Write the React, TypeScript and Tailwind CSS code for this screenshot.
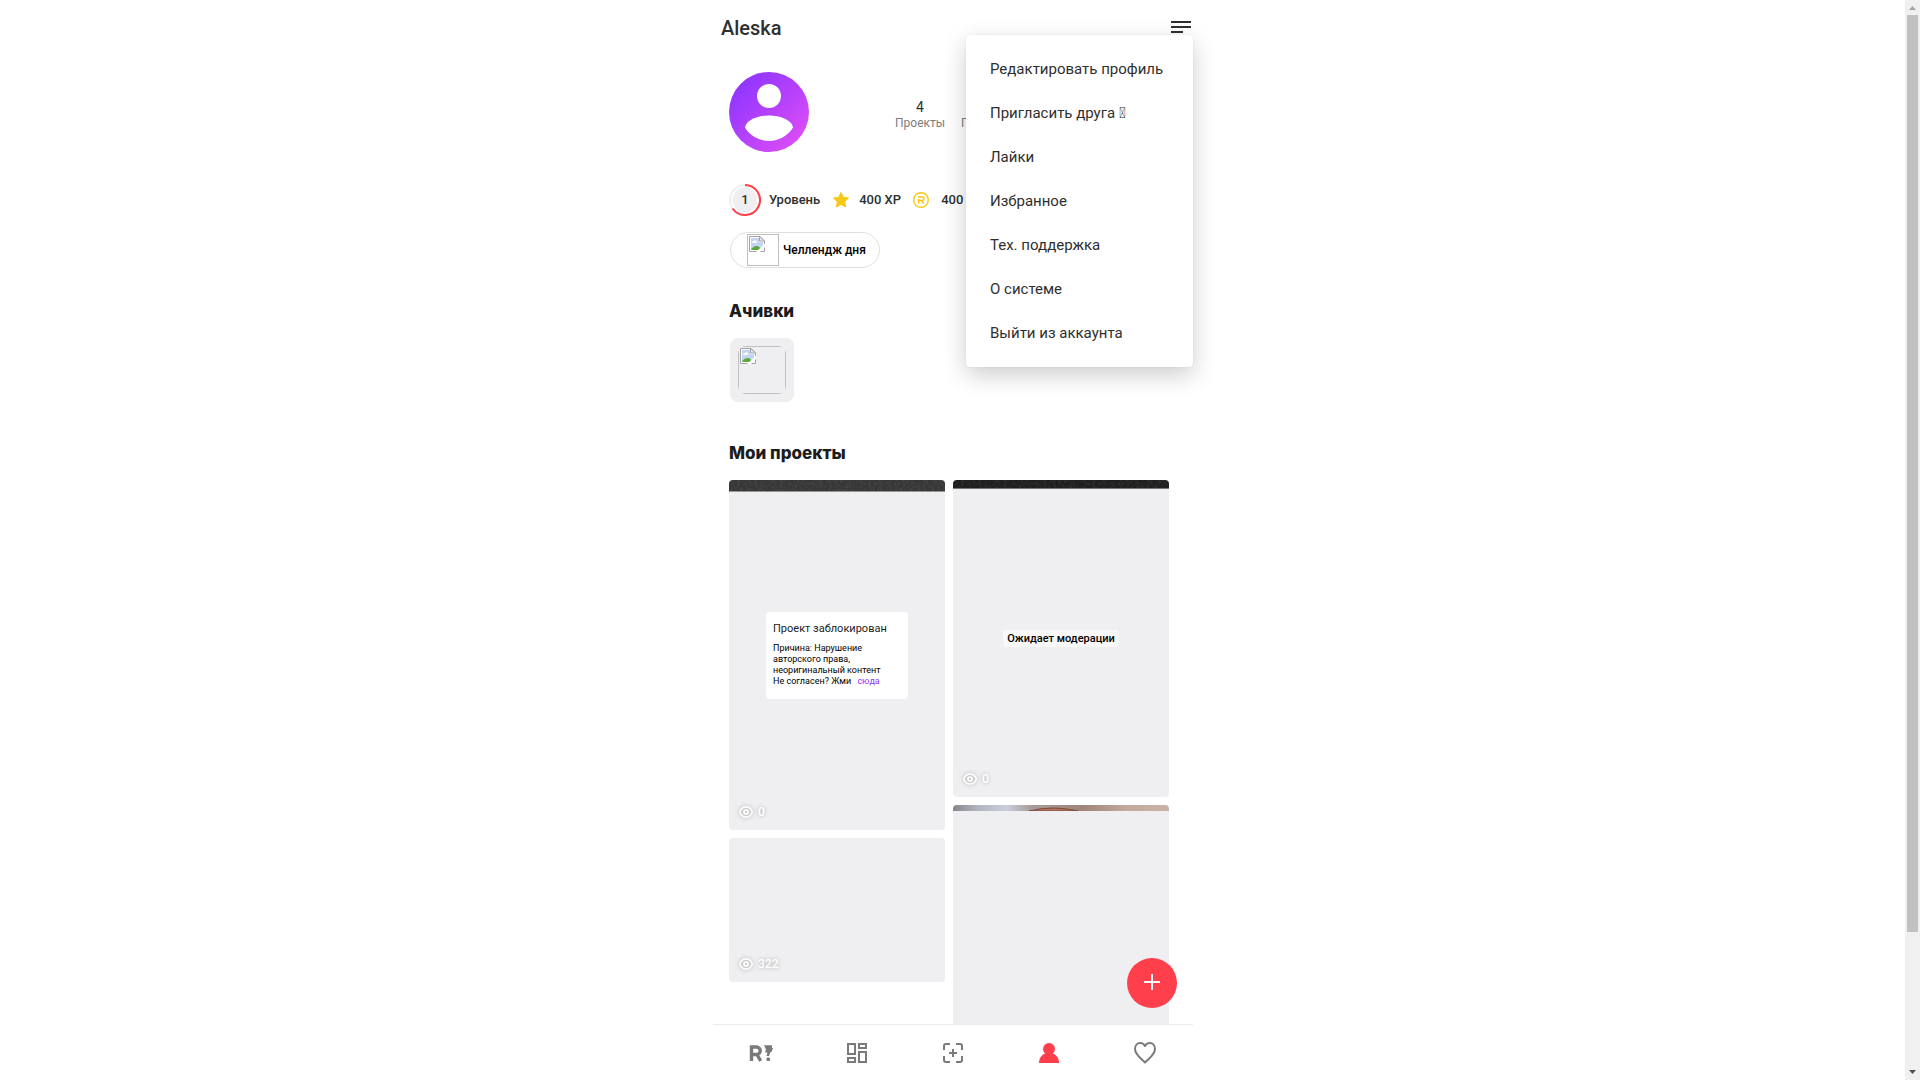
import React from 'react';

const menuItems = [
  'Редактировать профиль',
  'Пригласить друга \uE000',
  'Лайки',
  'Избранное',
  'Тех. поддержка',
  'О системе',
  'Выйти из аккаунта',
];

function BrokenImageIcon() {
  return (
    <svg width="16" height="16" viewBox="0 0 16 16" aria-hidden="true">
      <path d="M0.5 0.5H11L15.5 5V15.5H0.5Z" fill="#fff" stroke="#a3a3a3" />
      <path d="M2 2H10V6H14V14H2Z" fill="#c3d4f7" />
      <path d="M3 6.5a1.5 1.5 0 0 1 1.5-1.5 2 2 0 0 1 3.5 0.5 1 1 0 0 1 0 1.5H3.5Z" fill="#fff" />
      <path d="M2 14C3 11.500 5.500 10 8 10c1.500 0 2.500 1 3 2v2Z" fill="#55ab35" />
      <path d="M7 16L16 7.500V11L11 16Z" fill="#fff" />
      <path d="M10.500 0.500V5H15.500Z" fill="#eee" stroke="#a3a3a3" />
    </svg>
  );
}

function Eye() {
  return (
    <svg width="16" height="16" viewBox="0 0 16 16" fill="none" stroke="#fff" className="drop-shadow-[0_0_2px_rgba(0,0,0,0.3)]" aria-hidden="true">
      <path d="M1.700 8C4 1.300 12 1.300 14.300 8C12 14.700 4 14.700 1.700 8Z" strokeWidth="1.400" />
      <circle cx="8" cy="8" r="2" strokeWidth="1.700" />
    </svg>
  );
}

function Views({ count }: { count: number }) {
  return (
    <div className="absolute bottom-2.5 left-[9px] flex items-center gap-1 text-xs leading-4 font-medium text-white [text-shadow:0_0_4px_rgba(0,0,0,0.3)]">
      <Eye />
      <span>{count}</span>
    </div>
  );
}

function GrainStrip({ id, base, className }: { id: string; base: string; className: string }) {
  return (
    <svg className={className} aria-hidden="true">
      <filter id={id} x="0" y="0" width="100%" height="100%">
        <feTurbulence type="fractalNoise" baseFrequency="0.35" numOctaves="3" seed="4" />
        <feColorMatrix values="0 0 0 0 1  0 0 0 0 1  0 0 0 0 1  0.5 0 0 0 -0.18" />
      </filter>
      <rect width="100%" height="100%" fill={base} />
      <rect width="100%" height="100%" filter={`url(#${id})`} opacity="0.35" />
    </svg>
  );
}

function Stat({ value, label }: { value: string; label: string }) {
  return (
    <div className="flex flex-col items-center">
      <span className="text-sm leading-4 text-[#2f2f2f]">{value}</span>
      <span className="text-xs leading-4 text-[#7d7d7d]">{label}</span>
    </div>
  );
}

function NavLink({ label, children }: { label: string; children: React.ReactNode }) {
  return (
    <a href="#" aria-label={label} className="flex flex-1 items-center justify-center">
      {children}
    </a>
  );
}

export default function App() {
  return (
    <div className="flex h-screen overflow-hidden bg-white font-['Roboto','Noto_Sans',sans-serif] text-[#2f2f2f]">
      <div className="min-w-0 flex-1 pl-px">
        <div className="relative mx-auto flex h-full max-w-[480px] flex-col">
          <header className="flex h-14 shrink-0 items-center justify-between pr-0.5 pl-2">
            <h1 className="text-xl leading-6 font-medium">Aleska</h1>
            <button aria-label="Меню">
              <svg width="20" height="14" viewBox="0 0 20 14" fill="#2f2f33" aria-hidden="true">
                <rect y="0" width="20" height="2" />
                <rect y="5" width="20" height="2" />
                <rect y="10" width="12" height="2" />
              </svg>
            </button>
          </header>

          <main className="min-h-0 flex-1 overflow-hidden px-4">
            <section className="flex items-center pt-4">
              <svg width="80" height="80" viewBox="0 0 80 80" className="shrink-0" aria-label="Аватар">
                <defs>
                  <linearGradient id="avatar" x1="0.1" y1="0.1" x2="0.9" y2="0.9">
                    <stop stopColor="#8c35ff" />
                    <stop offset="1" stopColor="#dd4df8" />
                  </linearGradient>
                </defs>
                <circle cx="40" cy="40" r="40" fill="url(#avatar)" />
                <circle cx="40" cy="24" r="12" fill="#fff" />
                <path d="M16 55.500C17 48 29 43.500 40 43.500S63 48 64 55.500C59 63.500 50 69 40 69S21 63.500 16 55.500Z" fill="#fff" />
              </svg>
              <div className="ml-[86px] flex gap-4 pt-1.5">
                <Stat value="4" label="Проекты" />
                <Stat value="0" label="Подписчики" />
              </div>
            </section>

            <section className="mt-8 flex h-8 items-center text-[13px] leading-4 font-medium">
              <div className="relative grid size-8 place-items-center">
                <svg width="32" height="32" viewBox="0 0 32 32" fill="none" className="absolute inset-0" aria-hidden="true">
                  <circle cx="16" cy="16" r="15" stroke="#efeff1" strokeWidth="2" />
                  <circle cx="16" cy="16" r="12.500" fill="#efeff1" />
                  <path d="M16 1A15 15 0 1 1 3.600 24.500" stroke="#ff404c" strokeWidth="2" />
                </svg>
                <span className="relative">1</span>
              </div>
              <span className="ml-2">Уровень</span>
              <svg width="18" height="18" viewBox="0 0 18 18" className="ml-3 shrink-0" fill="#f7c815" stroke="#f7c815" strokeLinejoin="round" aria-hidden="true">
                <path d="M9 1.500L11.300 6.300L16.500 7L12.700 10.700L13.600 16L9 13.500L4.400 16L5.300 10.700L1.500 7L6.700 6.300Z" />
              </svg>
              <span className="ml-[9px]">400 XP</span>
              <svg width="16" height="16" viewBox="0 0 16 16" className="ml-3 shrink-0" fill="none" stroke="#f7c815" aria-hidden="true">
                <circle cx="8" cy="8" r="7.300" strokeWidth="1.400" />
                <path d="M5 5H9.300A1.500 1.500 0 0 1 9.300 8.500H6M8.500 8.500L10.800 11.500M5.600 7V11.500" strokeWidth="1.500" />
              </svg>
              <span className="ml-3">400</span>
            </section>

            <button className="mt-4 ml-px flex h-9 items-center gap-1 rounded-full border border-[#e0e0e0] pr-[13px] pl-4 text-xs leading-4 font-medium text-black">
              <span className="flex size-8 items-start border border-[#c0c0c0] p-px">
                <BrokenImageIcon />
              </span>
              Челлендж дня
            </button>

            <h2 className="mt-8 font-['Inter','Roboto',sans-serif] text-[17px] leading-[22px] font-extrabold text-[#1c1c1e]">Ачивки</h2>
            <div className="mt-4 ml-px grid size-16 place-items-center rounded-lg bg-[#efeff1]">
              <span className="size-12 overflow-hidden rounded-lg">
                <span className="flex size-12 items-start border border-[#c0c0c0] p-px">
                  <BrokenImageIcon />
                </span>
              </span>
            </div>

            <h2 className="mt-10 font-['Inter','Roboto',sans-serif] text-[17px] leading-[22px] font-extrabold text-[#1c1c1e]">Мои проекты</h2>
            <div className="mt-4 flex gap-2 pr-2">
              <div className="flex flex-1 flex-col gap-2">
                <article className="relative flex h-[350px] items-center justify-center overflow-hidden rounded bg-[#efeff1]">
                  <GrainStrip id="grainLight" base="#363636" className="absolute top-0 left-0 h-3 w-full border-b border-[#9a9292]" />
                  <div className="w-[142px] rounded bg-white px-[7px] pt-2 pb-3 text-[9px] leading-[11px] text-black">
                    <h3 className="mb-1.5 text-[11px] leading-[17px] text-[#1c1c1e]">Проект заблокирован</h3>
                    <p>Причина: Нарушение авторского права, неоригинальный контент</p>
                    <p>
                      Не согласен? Жми <a href="#" className="ml-1 text-[#8c35ff]">сюда</a>
                    </p>
                  </div>
                  <Views count={0} />
                </article>
                <article className="relative h-36 rounded bg-[#efeff1]">
                  <Views count={322} />
                </article>
              </div>
              <div className="flex flex-1 flex-col gap-2">
                <article className="relative flex h-[317px] items-center justify-center overflow-hidden rounded bg-[#efeff1]">
                  <GrainStrip id="grainDark" base="#1e1e1e" className="absolute top-0 left-0 h-[9px] w-full border-b border-[#777777]" />
                  <span className="rounded bg-[#f8f8f8] px-1 text-[11px] leading-[17px] font-medium text-black">Ожидает модерации</span>
                  <Views count={0} />
                </article>
                <article className="relative h-[400px] overflow-hidden rounded bg-[#efeff1]">
                  <svg className="h-[6px] w-full" viewBox="0 0 216 6" preserveAspectRatio="none" aria-hidden="true">
                    <defs>
                      <linearGradient id="photo">
                        <stop stopColor="#85858c" />
                        <stop offset="0.12" stopColor="#b4b7c1" />
                        <stop offset="0.25" stopColor="#c9cedb" />
                        <stop offset="0.36" stopColor="#a79d9b" />
                        <stop offset="0.6" stopColor="#a18478" />
                        <stop offset="0.8" stopColor="#c2a99c" />
                        <stop offset="1" stopColor="#c9b3a6" />
                      </linearGradient>
                    </defs>
                    <rect width="216" height="6" fill="url(#photo)" />
                    <path d="M76 6Q100 0 125 6Z" fill="#b5735f" stroke="#7a4a3c" />
                  </svg>
                </article>
              </div>
            </div>
          </main>

          <nav className="flex h-14 shrink-0 border-t border-[#ebebed] bg-white text-[#7a7a7a]">
            <NavLink label="Главная">
              <svg width="24" height="20" viewBox="0 0 24 20" fill="none" aria-hidden="true">
                <path d="M2.500 18V4H7.500A3.200 3.200 0 0 1 7.500 11.500H3M8 11.500L11.700 18" stroke="currentColor" strokeWidth="3.400" />
                <path d="M15 2.300H23V5H24L22.500 9H21.500L20 13H17.500L18.500 9.500H16L17 6.500Z" fill="currentColor" />
                <rect x="17.500" y="14.500" width="3.500" height="3.500" rx="1" fill="currentColor" />
              </svg>
            </NavLink>
            <NavLink label="Лента">
              <svg width="20" height="20" viewBox="0 0 20 20" fill="none" stroke="currentColor" strokeWidth="2" aria-hidden="true">
                <rect x="1" y="1" width="7" height="10" />
                <rect x="12" y="1" width="7" height="4" />
                <rect x="12" y="9" width="7" height="10" />
                <rect x="1" y="15" width="7" height="4" />
              </svg>
            </NavLink>
            <NavLink label="Создать">
              <svg width="20" height="20" viewBox="0 0 20 20" fill="none" stroke="currentColor" strokeWidth="2" aria-hidden="true">
                <path d="M1 7V3A2 2 0 0 1 3 1H7M13 1H17A2 2 0 0 1 19 3V7M19 13V17A2 2 0 0 1 17 19H13M7 19H3A2 2 0 0 1 1 17V13M10 6V14M6 10H14" />
              </svg>
            </NavLink>
            <NavLink label="Профиль">
              <svg width="20" height="20" viewBox="0 0 20 20" fill="#ff404c" aria-hidden="true">
                <circle cx="10" cy="6" r="6" />
                <path d="M0 20C0 15 2.500 12.500 5 11H15C17.500 12.500 20 15 20 20Z" />
              </svg>
            </NavLink>
            <NavLink label="Избранное">
              <svg width="22" height="22" viewBox="0 0 22 22" fill="none" stroke="currentColor" strokeWidth="2" strokeLinejoin="round" aria-hidden="true">
                <path d="M11 20.500C6.500 16 1 12.500 1 7C1 3.500 3.300 1 6.200 1C8.500 1 10 2 11 4C12 2 13.500 1 15.800 1C18.700 1 21 3.500 21 7C21 12.500 15.500 16 11 20.500Z" />
              </svg>
            </NavLink>
          </nav>

          <button aria-label="Добавить проект" className="absolute right-4 bottom-[72px] flex size-[50px] items-center justify-center rounded-full bg-[#ff404c] pb-0.5">
            <svg width="16" height="16" viewBox="0 0 16 16" stroke="#fff" strokeWidth="2" aria-hidden="true">
              <path d="M8 0V16M0 8H16" />
            </svg>
          </button>

          <div className="absolute top-[35px] right-0 w-[227px] rounded bg-white py-3 shadow-[0_8px_24px_rgba(0,0,0,0.2),0_0_2px_rgba(0,0,0,0.08)]">
            {menuItems.map((item) => (
              <button key={item} className="flex h-11 w-full items-center px-6 text-left text-[15px] whitespace-nowrap">
                {item}
              </button>
            ))}
          </div>
        </div>
      </div>

      <div className="flex w-[15px] shrink-0 flex-col items-center bg-[#f0f0f0]" aria-hidden="true">
        <svg width="15" height="15" viewBox="0 0 15 15" fill="#a3a3a3" className="shrink-0">
          <path d="M4 10L7.500 6L11 10Z" />
        </svg>
        <div className="h-[917px] w-[11px] bg-[#c1c1c1]" />
        <svg width="15" height="15" viewBox="0 0 15 15" fill="#505050" className="mt-auto shrink-0">
          <path d="M4 5L7.500 9L11 5Z" />
        </svg>
      </div>
    </div>
  );
}
